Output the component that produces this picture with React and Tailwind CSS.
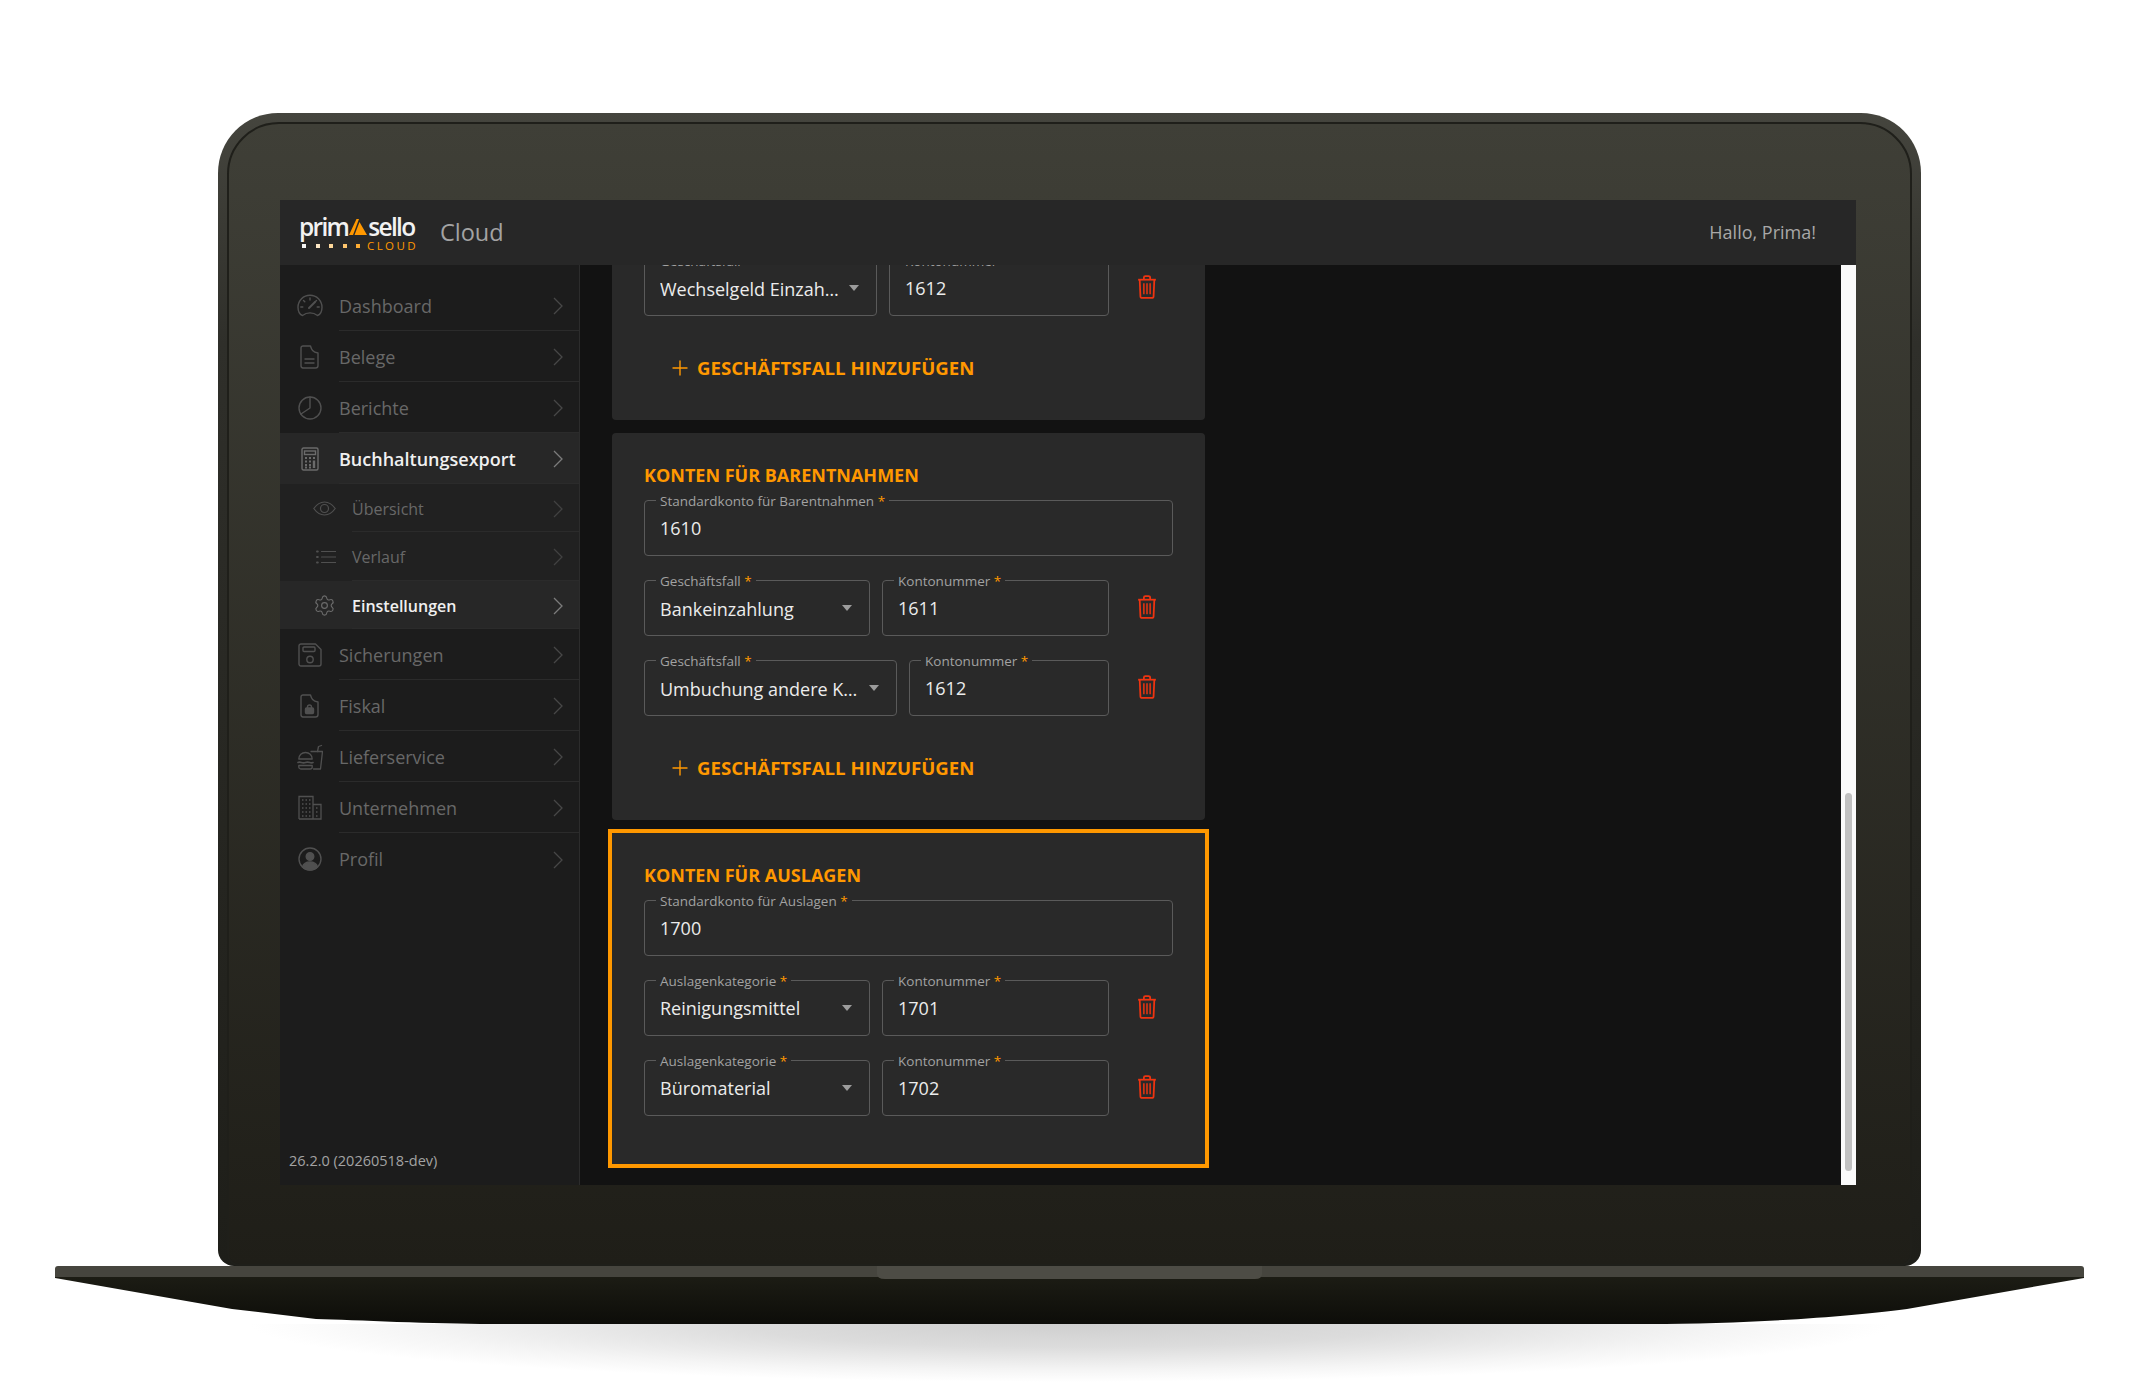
import React from "react";
import { Plus, Settings } from "lucide-react";

const GaugeIcon = () => (
    <svg width="26" height="23" viewBox="0 0 26 23" fill="none" stroke="currentColor" strokeWidth="1.4" strokeLinecap="round" strokeLinejoin="round">
        <path d="M5.5 21.5C3 20.5 1 17 1 13.2A12 12 0 0 1 25 13.2C25 17 23 20.5 20.5 21.5C16 18 10 18 5.5 21.5Z" />
        <path d="M13 4v2M6.5 6.5l1.3 1.3M19.5 6.5l-1.3 1.3M3.8 13h2M20.2 13h2" />
        <path d="M12 14l6-6" strokeWidth="2" />
    </svg>
);

const DocIcon = () => (
    <svg width="19" height="24" viewBox="0 0 19 24" fill="none" stroke="currentColor" strokeWidth="1.4" strokeLinecap="round" strokeLinejoin="round">
        <path d="M3 1h7.500c1 3 1.500 6 7.500 7v12.500a2.500 2.500 0 0 1-2.500 2.500H3a2.200 2.200 0 0 1-2-2.200V3a2 2 0 0 1 2-2Z" />
        <path d="M5 14h9M5 18h9" />
    </svg>
);

const PieIcon = () => (
    <svg width="24" height="24" viewBox="0 0 24 24" fill="none" stroke="currentColor" strokeWidth="1.4" strokeLinecap="round" strokeLinejoin="round">
        <circle cx="12" cy="12" r="11" />
        <path d="M12 1v11L3 18" />
    </svg>
);

const CalcIcon = () => (
    <svg width="18" height="24" viewBox="0 0 18 24" fill="none" stroke="currentColor" strokeWidth="1.4">
        <rect x="1" y="1" width="16" height="22" rx="1.500" />
        <rect x="3.500" y="4" width="11" height="3.500" />
        <path d="M4 11h2M8 11h2M12 11h2M4 14.500h2M8 14.500h2M4 18h2M8 18h2M4 20.500h2M8 20.500h2" strokeWidth="1.800" />
        <path d="M13 13.500v7.500" strokeWidth="2.400" />
    </svg>
);

const EyeIcon = () => (
    <svg width="23" height="15" viewBox="0 0 23 15" fill="none" stroke="currentColor" strokeWidth="1.2">
        <path d="M.8 7.500C4 3 7.500 1 11.500 1s7.500 2 10.700 6.500C19 12 15.500 14 11.500 14S4 12 .8 7.500Z" />
        <circle cx="11.500" cy="7.500" r="4" />
    </svg>
);

const ListIcon = () => (
    <svg width="20" height="14" viewBox="0 0 20 14" fill="none" stroke="currentColor" strokeWidth="1.200" strokeLinecap="round">
        <path d="M5.500 1.500H19.500M5.500 7H19.500M5.500 12.500H19.500" />
        <path d="M1 1.500h.8M1 7h.8M1 12.500h.8" strokeWidth="2" />
    </svg>
);

const SaveIcon = () => (
    <svg width="24" height="24" viewBox="0 0 24 24" fill="none" stroke="currentColor" strokeWidth="1.400" strokeLinejoin="round">
        <path d="M3 1h14.500L23 6.500V21a2 2 0 0 1-2 2H3a2 2 0 0 1-2-2V3a2 2 0 0 1 2-2Z" />
        <rect x="5" y="4" width="12" height="4.500" rx="1" />
        <circle cx="12" cy="16.500" r="3.200" />
    </svg>
);

const FileLockIcon = () => (
    <svg width="19" height="24" viewBox="0 0 19 24" fill="none" stroke="currentColor" strokeWidth="1.400" strokeLinejoin="round">
        <path d="M3 1h7.500c1 3 1.500 6 7.500 7v12.500a2.500 2.500 0 0 1-2.500 2.500H3a2.200 2.200 0 0 1-2-2.200V3a2 2 0 0 1 2-2Z" />
        <rect x="5.500" y="14" width="8" height="5.500" rx="1" fill="currentColor" />
        <path d="M7.500 14v-1a2 2 0 0 1 4 0v1" />
    </svg>
);

const FoodIcon = () => (
    <svg width="26" height="26" viewBox="0 0 26 26" fill="none" stroke="currentColor" strokeWidth="1.300" strokeLinecap="round" strokeLinejoin="round">
        <path d="M14 7.500h11.500l-2 17.500h-7" />
        <path d="M20.500 7.500l1-5 3-1" />
        <path d="M1.800 15c0-4 3-6.500 6.700-6.500s6.700 2.500 6.700 6.500Z" />
        <path d="M1 18.500c2.500-1.500 4 1.500 7.500 0s5 1.500 7.500 0" strokeWidth="1.600" />
        <path d="M1.800 21.500h13.400v1.500a2 2 0 0 1-2 2H3.800a2 2 0 0 1-2-2Z" />
    </svg>
);

const BuildingIcon = () => (
    <svg width="24" height="25" viewBox="0 0 24 25" fill="none" stroke="currentColor" strokeWidth="1.300">
        <path d="M1 24V1.500h14V24" />
        <path d="M15 9.500h8V24H1" />
        <path d="M4 5h1.500M7.500 5H9M11 5h1.500M4 9h1.500M7.500 9H9M11 9h1.500M4 13h1.500M7.500 13H9M11 13h1.500M4 17h1.500M7.500 17H9M11 17h1.500M4 21h1.500M7.500 21H9M11 21h1.500M18 13h1.500M18 17h1.500M18 21h1.500" strokeWidth="1.500" />
    </svg>
);

const UserIcon = () => (
    <svg width="24" height="24" viewBox="0 0 24 24" fill="none" stroke="currentColor" strokeWidth="1.400">
        <circle cx="12" cy="12" r="11" />
        <circle cx="12" cy="9.500" r="3.800" fill="currentColor" />
        <path d="M4.500 20c1-3.500 4-5 7.500-5s6.500 1.500 7.500 5c-2 2-4.500 3-7.500 3s-5.500-1-7.500-3Z" fill="currentColor" />
    </svg>
);

const TrashIcon = () => (
    <svg width="20" height="24" viewBox="0 0 19 23" fill="none" stroke="#ee3410" strokeWidth="1.700" strokeLinejoin="round">
        <path d="M1 4.500h17" />
        <path d="M6.500 4.500V2.500a1.500 1.500 0 0 1 1.500-1.500h3a1.500 1.500 0 0 1 1.500 1.500v2" />
        <path d="M2.500 4.500l.7 16a1.500 1.500 0 0 0 1.500 1.500h9.600a1.500 1.500 0 0 0 1.500-1.500l.7-16" />
        <path d="M6.500 8v10.500M9.500 8v10.500M12.500 8v10.500" strokeWidth="1.400" />
    </svg>
);

const NavChevron = ({ className }) => (
    <svg width="10" height="18" viewBox="0 0 10 18" fill="none" stroke="currentColor" strokeWidth="1.300" className={className}>
        <path d="M1 1l8 8-8 8" />
    </svg>
);

const mainNavTop = [
    { label: "Dashboard", icon: <GaugeIcon /> },
    { label: "Belege", icon: <DocIcon /> },
    { label: "Berichte", icon: <PieIcon /> },
];

const mainNavBottom = [
    { label: "Sicherungen", icon: <SaveIcon /> },
    { label: "Fiskal", icon: <FileLockIcon /> },
    { label: "Lieferservice", icon: <FoodIcon /> },
    { label: "Unternehmen", icon: <BuildingIcon /> },
];

const NavRow = ({ item, active, last }) => (
    <div className={`flex h-[51px] items-center ${active ? "bg-[#272727]" : ""}`}>
        <div className={`flex w-[59px] shrink-0 justify-center ${active ? "text-[#6b6b6b]" : "text-[#505050]"}`}>{item.icon}</div>
        <div className={`flex h-full flex-1 items-center justify-between pt-[2px] pr-[16px] ${last ? "" : "border-b border-[#2b2b2b]"}`}>
            <span className={`text-[18px] ${active ? "font-semibold text-[#f0f0f0]" : "text-[#686868]"}`}>{item.label}</span>
            <NavChevron className={active ? "text-[#7c7c7c]" : "text-[#474747]"} />
        </div>
    </div>
);

const SubNavRow = ({ item, active, height = "h-[48px]" }) => (
    <div className={`flex items-center ${height} ${active ? "bg-[#272727]" : "bg-[#212121]"}`}>
        <div className={`flex w-[72px] shrink-0 justify-end pr-[16px] ${active ? "text-[#6b6b6b]" : "text-[#505050]"}`}>{item.icon}</div>
        <div className="flex h-full flex-1 items-center justify-between border-b border-[#2b2b2b] pt-[2px] pr-[16px]">
            <span className={`text-[16px] ${active ? "font-semibold text-[#f0f0f0]" : "text-[#686868]"}`}>{item.label}</span>
            <NavChevron className={active ? "text-[#7c7c7c]" : "text-[#414141]"} />
        </div>
    </div>
);

const Sidebar = () => (
    <aside className="flex w-[300px] shrink-0 flex-col border-r border-[#2c2c2c] bg-[#1c1c1c] pt-[15px]">
        {mainNavTop.map((item) => <NavRow key={item.label} item={item} />)}
        <NavRow item={{ label: "Buchhaltungsexport", icon: <CalcIcon /> }} active />
        <SubNavRow item={{ label: "Übersicht", icon: <EyeIcon /> }} />
        <SubNavRow item={{ label: "Verlauf", icon: <ListIcon /> }} height="h-[49px]" />
        <SubNavRow item={{ label: "Einstellungen", icon: <Settings size={23} strokeWidth={1.2} /> }} active />
        {mainNavBottom.map((item) => <NavRow key={item.label} item={item} />)}
        <NavRow item={{ label: "Profil", icon: <UserIcon /> }} last />
        <div className="mt-auto pb-[14px] pl-[9px] text-[14.500px] leading-[20px] text-[#a3a3a3]">26.2.0 (20260518-dev)</div>
    </aside>
);

// outlined field, label sits on the border
const Field = ({ label, value, select, shift, className = "" }) => (
    <div className={`relative flex h-14 items-center rounded border border-[#5a5a5a] pl-[15px] ${select ? "pr-[34px]" : ""} ${className}`}>
        <span className="absolute -top-[10px] left-[11px] bg-[#292929] px-1 text-[13.500px] leading-[20px] whitespace-nowrap text-[#a2a2a2]">
            {label} <span className="text-[#ff9800]">*</span>
        </span>
        <span className={`truncate text-[18px] text-[#ececec] ${shift ? "mt-[2px]" : ""}`}>{value}</span>
        {select && <span className="absolute top-[24px] right-[17px] h-0 w-0 border-x-[5px] border-t-[6px] border-x-transparent border-t-[#9c9c9c]" />}
    </div>
);

const AccountRow = ({ label, value, number, width, shift }) => (
    <div className="flex">
        <Field label={label} value={value} select shift={shift} className={width} />
        <Field label="Kontonummer" value={number} className="ml-3 min-w-0 flex-1" />
        <div className="flex w-[64px] shrink-0 items-center justify-center pb-[2px] pl-[12px]"><TrashIcon /></div>
    </div>
);

const AddButton = () => (
    <div className="flex h-[56px] items-center pl-[24px] text-[#ff9800]">
        <Plus size={24} strokeWidth={1.4} />
        <span className="ml-[5px] text-[18.650px] font-bold uppercase">Geschäftsfall hinzufügen</span>
    </div>
);

const CardTitle = ({ children }) => (
    <h2 className="-mt-[2px] mb-[13px] text-[18px] leading-[24px] font-bold text-[#ff9800] uppercase">{children}</h2>
);

const Content = () => (
    <main className="min-w-0 flex-1 overflow-hidden bg-[#121212] pl-[32px]">
        <div className="-mt-[5px] flex w-[593px] flex-col gap-[13px]">
            <section className="rounded-b bg-[#292929] px-[32px] pb-[24px]">
                <AccountRow label="Geschäftsfall" value="Wechselgeld Einzahlung" number="1612" width="w-[233px]" shift />
                <div className="mt-[24px]"><AddButton /></div>
            </section>
            <section className="rounded bg-[#292929] px-[32px] pt-[32px] pb-[24px]">
                <CardTitle>Konten für Barentnahmen</CardTitle>
                <Field label="Standardkonto für Barentnahmen" value="1610" />
                <div className="mt-[24px] flex flex-col gap-[24px]">
                    <AccountRow label="Geschäftsfall" value="Bankeinzahlung" number="1611" width="w-[226px]" shift />
                    <AccountRow label="Geschäftsfall" value="Umbuchung andere Konten" number="1612" width="w-[253px]" shift />
                </div>
                <div className="mt-[24px]"><AddButton /></div>
            </section>
            <section className="bg-[#292929] px-[32px] pt-[32px] pb-[48px] outline-4 outline-[#ff9800]">
                <CardTitle>Konten für Auslagen</CardTitle>
                <Field label="Standardkonto für Auslagen" value="1700" />
                <div className="mt-[24px] flex flex-col gap-[24px]">
                    <AccountRow label="Auslagenkategorie" value="Reinigungsmittel" number="1701" width="w-[226px]" />
                    <AccountRow label="Auslagenkategorie" value="Büromaterial" number="1702" width="w-[226px]" />
                </div>
            </section>
        </div>
    </main>
);

const Logo = () => (
    <div className="-ml-[1px] flex w-[117px] flex-col">
        <div className="flex h-[26px] items-end text-[24.500px] leading-[26px] font-semibold tracking-[-1.700px] text-[#f2f2f2]">
            <span>prim</span>
            <svg width="18" height="16" viewBox="0 0 18 16" className="mb-[5px] ml-[1px] shrink-0">
                <path d="M0 16 7.500 0h2.500L4 16Z M5.500 16 10.500 3 18 16Z" fill="#ff9800" />
            </svg>
            <span className="ml-[1px]">sello</span>
        </div>
        <div className="flex h-[12px] items-center justify-between">
            <div className="flex gap-[9.500px] pl-[3px]">
                <span className="h-[4px] w-[4px] bg-[#f5f5f5]" />
                <span className="h-[4px] w-[4px] bg-[#fbe6c4]" />
                <span className="h-[4px] w-[4px] bg-[#fdd79a]" />
                <span className="h-[4px] w-[4px] bg-[#fec56d]" />
                <span className="h-[4px] w-[4px] bg-[#ffad33]" />
            </div>
            <span className="-mr-[2px] text-[11.500px] leading-[12px] tracking-[2.400px] text-[#ff9800]">CLOUD</span>
        </div>
    </div>
);

const Header = () => (
    <header className="flex h-[65px] shrink-0 items-center justify-between bg-[#272727] pr-[40px] pl-[20px]">
        <div className="flex items-center">
            <Logo />
            <span className="ml-[24px] text-[23.500px] text-[#a3a3a3]">Cloud</span>
        </div>
        <span className="text-[18px] text-[#a8a8a8]">Hallo, Prima!</span>
    </header>
);

const LaptopBase = () => (
    <svg width="2029" height="58" viewBox="0 0 2029 58" className="ml-[55px] block shrink-0">
        <defs>
            <linearGradient id="baseBottom" x1="0" y1="0" x2="0" y2="1">
                <stop offset="0" stopColor="#1c1c14" />
                <stop offset="1" stopColor="#0d0d09" />
            </linearGradient>
        </defs>
        <path d="M0 11H2029V12L1852 43C1800 50 1700 58 1593 58H436C380 58 300 54 261 53L177 43L0 12Z" fill="url(#baseBottom)" />
        <path d="M3 0H2026Q2029 0 2029 3V11H0V3Q0 0 3 0Z" fill="#46453e" />
        <path d="M822 0H1207V8Q1207 13 1200 13H830Q822 13 822 8Z" fill="#4d4c45" />
    </svg>
);

export default function App() {
    return (
        <div className="flex h-[1382px] w-[2143px] flex-col overflow-hidden bg-white font-['Open_Sans','Noto_Sans',sans-serif]">
            <div className="mt-[113px] ml-[218px] h-[1153px] w-[1703px] shrink-0 rounded-t-[60px] rounded-b-[16px] bg-linear-to-b from-[#45453e] via-[#2f2f2a] via-[20%] to-[#1e1e19] p-[9px] pb-0">
                <div className="h-full rounded-t-[52px] rounded-b-[12px] border-2 border-[#1f1f1a] bg-linear-to-b from-[#3f3f37] to-[#1f1e18] pt-[76px] pl-[51px]">
                    <div className="flex h-[985px] w-[1576px] flex-col">
                        <Header />
                        <div className="flex min-h-0 flex-1">
                            <Sidebar />
                            <Content />
                            <div className="w-[15px] shrink-0 bg-[#fafafa] px-[4px] pt-[528px]">
                                <div className="h-[378px] rounded bg-[#c1c1c1]" />
                            </div>
                        </div>
                    </div>
                </div>
            </div>
            <LaptopBase />
            <div className="ml-[250px] h-[58px] w-[1640px] bg-[radial-gradient(ellipse_50%_100%_at_50%_0%,#cfcfcf_0%,#dcdcdc_40%,#f5f5f5_80%,#ffffff_100%)]" />
        </div>
    );
}
